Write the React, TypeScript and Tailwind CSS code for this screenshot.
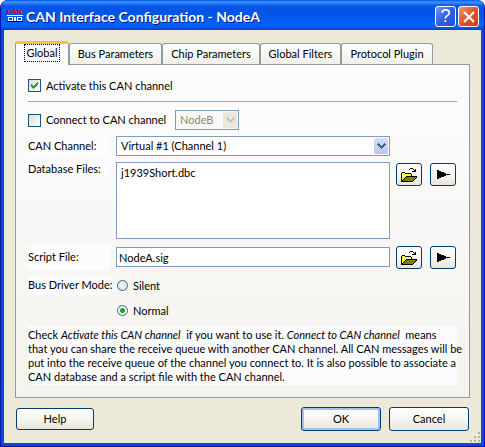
import React from "react";

const FIELD = "border border-[#7f9db9] bg-white text-black outline-none";
const XP_BUTTON =
  "flex items-center justify-center rounded-[3px] border border-[#003c74] bg-gradient-to-b from-white via-[#f6f5f0] to-[#e8e5da]";
const CHECKBOX =
  "size-[13px] shrink-0 appearance-none border border-[#1d5281] bg-gradient-to-br from-[#dcdcd7] to-white";
const RADIO =
  "size-[11px] shrink-0 appearance-none rounded-full border border-[#3a6a94] bg-[radial-gradient(circle,#f4f4f0,#dcdcd7)] checked:bg-[radial-gradient(circle,#21a121_0_2px,#f0f0ec_3px)]";

function Chevron({ className }: { className: string }) {
  return (
    <svg viewBox="0 0 9 6" className={"h-[6px] w-[9px] " + className} shapeRendering="crispEdges" aria-hidden="true">
      <path
        fill="currentColor"
        d="M1 0h1v1h1v1h1v1h1V2h1V1h1V0h1v1h1v1H8v1H7v1H6v1H5v1H4V5H3V4H2V3H1V2H0V1h1z"
      />
    </svg>
  );
}

function FolderIcon() {
  return (
    <svg viewBox="0 0 16 14" className="h-[14px] w-4" shapeRendering="crispEdges" aria-hidden="true">
      <path fill="#ffff33" d="M1 5h3v1h6v2H5v1H4v1H3v1H2v1H1z" />
      <path fill="#fff" d="M2 5h1v1H2zM4 6h1v1H4zM6 6h1v1H6zM8 6h1v1H8zM3 7h1v1H3zM5 7h1v1H5zM7 7h1v1H7zM2 8h1v1H2z" />
      <path fill="#808000" d="M5 9h10v1h-1v1h-1v1h-1v1H2v-1h1v-1h1v-1h1z" />
      <path
        fill="#000"
        d="M1 4h3v1H1zM4 5h6v1H4zM10 6h1v2h-1zM0 5h1v8H0zM5 8h11v1H5zM4 9h1v1H4zM3 10h1v1H3zM2 11h1v1H2zM1 12h1v1H1zM0 13h12v1H0zM15 9h1v1h-1zM14 10h1v1h-1zM13 11h1v1h-1zM12 12h1v1h-1zM9 0h3v1H9zM8 1h1v1H8zM12 1h1v1h-1zM14 1h1v3h-1zM13 2h1v2h-1zM11 3h2v1h-2z"
      />
    </svg>
  );
}

function ArrowIcon() {
  return (
    <svg viewBox="0 0 13 9" className="h-[9px] w-[13px]" shapeRendering="crispEdges" aria-hidden="true">
      <path d="M0 0h2v1h2v1h3v1h2v1h4v1H9v1H7v1H4v1H2v1H0z" />
    </svg>
  );
}

function AppIcon() {
  return (
    <svg viewBox="0 0 16 13" className="h-[13px] w-4 overflow-visible" aria-hidden="true">
      <text x="0" y="5" fill="#ff0010" fontSize="7" fontWeight="700" fontFamily="Liberation Sans, sans-serif">
        CAN
      </text>
      <g shapeRendering="crispEdges">
        <path fill="#fff" d="M0 6h16v1H0zM1 8h5v4H1zM7 8h2v4H7zM10 8h5v4h-5z" />
        <path fill="#0848c8" d="M2 9h3v2H2zM11 9h3v2h-3z" />
        <path fill="#000" d="M0 12h16v1H0z" />
      </g>
    </svg>
  );
}

function RowButtons({ target }: { target: string }) {
  return (
    <div className="mr-px flex gap-2">
      <button type="button" aria-label={"Browse " + target} className={XP_BUTTON + " h-[23px] w-[26px]"}>
        <FolderIcon />
      </button>
      <button type="button" aria-label={"More " + target} className={XP_BUTTON + " h-[23px] w-[26px]"}>
        <ArrowIcon />
      </button>
    </div>
  );
}

const TABS = [
  { name: "Bus Parameters", width: "w-[93px]" },
  { name: "Chip Parameters", width: "w-[98px]" },
  { name: "Global Filters", width: "w-[81px]" },
  { name: "Protocol Plugin", width: "w-[92px]" },
];

export default function App() {
  return (
    <div className="bg-white font-[Lato,'Liberation_Sans',sans-serif] text-[11px] leading-[14px] text-black">
      <div className="overflow-hidden rounded-t-lg border-x border-b border-[#0018a8] bg-[#0842d8]">
        <header className="flex h-[30px] items-center bg-[linear-gradient(#0058e6,#3a93ff_2px,#0554e8_6px,#0055e5_14px,#0264fb_24px,#005cf0_27px,#0040c4)] pr-[5px] pl-[6px]">
          <AppIcon />
          <h1 className="mt-[3px] ml-[3px] flex-1 text-[14px] font-bold whitespace-nowrap text-white [text-shadow:1px_1px_#0a1883]">
            CAN Interface Configuration - NodeA
          </h1>
          <div className="mt-[3px] flex gap-[2px]">
            <button
              type="button"
              aria-label="Help"
              className="size-[21px] rounded-[3px] border border-white bg-gradient-to-br from-[#6f96f0] via-[#2f62e0] to-[#1c50d8] font-['Liberation_Sans',sans-serif] text-[18px] leading-[19px] text-white"
            >
              ?
            </button>
            <button
              type="button"
              aria-label="Close"
              className="flex size-[21px] items-center justify-center rounded-[3px] border border-white bg-gradient-to-br from-[#f09478] via-[#e0522c] to-[#cc3c10]"
            >
              <svg viewBox="0 0 12 12" className="size-3" aria-hidden="true">
                <path d="M1 1l10 10M11 1L1 11" stroke="#fff" strokeWidth="2.2" />
              </svg>
            </button>
          </div>
        </header>

        <form
          className="relative border-[3px] border-t-0 border-[#0848e0] bg-[#ece9d8] px-[11px] pt-[11px] pb-3"
          onSubmit={(e) => e.preventDefault()}
        >
          <div role="tablist" className="flex items-end">
            <button
              type="button"
              role="tab"
              aria-selected="true"
              className="relative -mb-px flex h-[24px] w-[54px] items-start justify-center rounded-t-[3px] border-x border-t-[3px] border-x-[#919b9c] border-t-[#ffc03c] bg-[#fcfcfe]"
            >
              <span className="h-[18px] border border-dotted border-black px-px leading-[15px]">Global</span>
            </button>
            {TABS.map((tab) => (
              <button
                key={tab.name}
                type="button"
                role="tab"
                aria-selected="false"
                className={
                  "h-[21px] rounded-t-[3px] border border-b-0 border-[#919b9c] bg-gradient-to-b from-white to-[#f0f0ea] whitespace-nowrap " +
                  tab.width
                }
              >
                {tab.name}
              </button>
            ))}
          </div>

          <div
            role="tabpanel"
            aria-label="Global"
            className="border border-[#919b9c] bg-gradient-to-b from-[#fcfcfe] to-[#f4f3ee] px-3 pt-[14px] pb-3"
          >
            <label className="flex h-[13px] items-center gap-[5px]">
              <span className="relative flex">
                <input type="checkbox" defaultChecked className={"peer " + CHECKBOX} />
                <svg
                  viewBox="0 0 7 7"
                  className="pointer-events-none absolute top-[3px] left-[3px] hidden size-[7px] peer-checked:block"
                  shapeRendering="crispEdges"
                  aria-hidden="true"
                >
                  <path fill="#21a121" d="M6 0h1v3H6v1H5v1H4v1H3v1H2V6H1V5H0V2h1v1h1v1h1V3h1V2h1V1h1z" />
                </svg>
              </span>
              Activate this CAN channel
            </label>

            <hr className="mt-[9px] border-[#aca899]" />

            <div className="mt-[8px] flex h-5 items-center">
              <label className="flex w-[147px] items-center gap-[5px] whitespace-nowrap">
                <input type="checkbox" className={CHECKBOX} />
                Connect to CAN channel
              </label>
              <span className="relative flex">
                <select
                  disabled
                  aria-label="Connected node"
                  className="h-5 w-16 appearance-none border border-[#7f9db9] bg-[#f8f8f6] pl-1 text-[#8d8a7d] opacity-100"
                >
                  <option>NodeB</option>
                </select>
                <span className="pointer-events-none absolute inset-y-[2px] right-[2px] flex w-[14px] items-center justify-center rounded-[2px] bg-[#e9e8e0]">
                  <Chevron className="text-[#c9c7ba]" />
                </span>
              </span>
            </div>

            <div className="mt-[6px] grid grid-cols-[82px_1fr_auto] gap-x-[6px]">
              <label htmlFor="channel" className="h-5 bg-[#fcfcfe] leading-[20px]">
                CAN Channel:
              </label>
              <span className="relative flex">
                <select id="channel" className={"h-5 w-full appearance-none pl-1 " + FIELD}>
                  <option>Virtual #1 (Channel 1)</option>
                </select>
                <span className="pointer-events-none absolute inset-y-[2px] right-[2px] flex w-[14px] items-center justify-center rounded-[2px] bg-gradient-to-b from-[#d2defc] to-[#b4c8f6]">
                  <Chevron className="text-[#4d6185]" />
                </span>
              </span>
              <span />

              <label htmlFor="databases" className="mt-[6px] h-[14px] bg-[#fcfcfe]">
                Database Files:
              </label>
              <select id="databases" size={4} className={"mt-[6px] h-[77px] overflow-hidden pt-[3px] pl-[2px] " + FIELD}>
                <option className="min-h-0 px-[2px] py-0">j1939Short.dbc</option>
              </select>
              <div className="mt-[7px]">
                <RowButtons target="database files" />
              </div>

              <label htmlFor="script" className="mt-[6px] h-[25px] bg-[#fcfcfe] leading-[24px]">
                Script File:
              </label>
              <input id="script" defaultValue="NodeA.sig" className={"mt-[8px] h-5 min-w-0 px-[2px] " + FIELD} />
              <div className="mt-[7px]">
                <RowButtons target="script file" />
              </div>
            </div>

            <fieldset className="mt-[6px] flex gap-[7px]">
              <div id="mode" className="h-[19px] w-[82px] bg-[#fcfcfe] leading-[18px] whitespace-nowrap">
                Bus Driver Mode:
              </div>
              <div role="radiogroup" aria-labelledby="mode" className="flex flex-col gap-[6px]">
                <label className="flex h-[19px] items-center gap-[5px]">
                  <input type="radio" name="mode" className={RADIO} />
                  Silent
                </label>
                <label className="flex h-[19px] items-center gap-[5px]">
                  <input type="radio" name="mode" defaultChecked className={RADIO} />
                  Normal
                </label>
              </div>
            </fieldset>

            <p className="mt-[6px] h-[59px] bg-[#fcfcfe] pt-[2px] whitespace-nowrap">
              Check <i>Activate this CAN channel</i>&nbsp; if you want to use it. <i>Connect to CAN channel</i>&nbsp; means
              <br />
              that you can share the receive queue with another CAN channel. All CAN messages will be
              <br />
              put into the receive queue of the channel you connect to. It is also possible to associate a
              <br />
              CAN database and a script file with the CAN channel.
            </p>
          </div>

          <div className="mt-[9px] flex items-center gap-2 px-px">
            <button type="button" className={XP_BUTTON + " mr-auto h-[22px] w-[78px]"}>
              Help
            </button>
            <button type="submit" className={XP_BUTTON + " h-6 w-20 shadow-[inset_0_0_0_2px_#a5c0f0]"}>
              OK
            </button>
            <button type="button" className={XP_BUTTON + " h-6 w-20"}>
              Cancel
            </button>
          </div>
          <svg
            viewBox="0 0 10 10"
            className="absolute right-px bottom-px size-[10px]"
            shapeRendering="crispEdges"
            aria-hidden="true"
          >
            <path fill="#b8b4a2" d="M8 0h2v2H8zM8 4h2v2H8zM8 8h2v2H8zM4 4h2v2H4zM4 8h2v2H4zM0 8h2v2H0z" />
          </svg>
        </form>
      </div>
    </div>
  );
}
